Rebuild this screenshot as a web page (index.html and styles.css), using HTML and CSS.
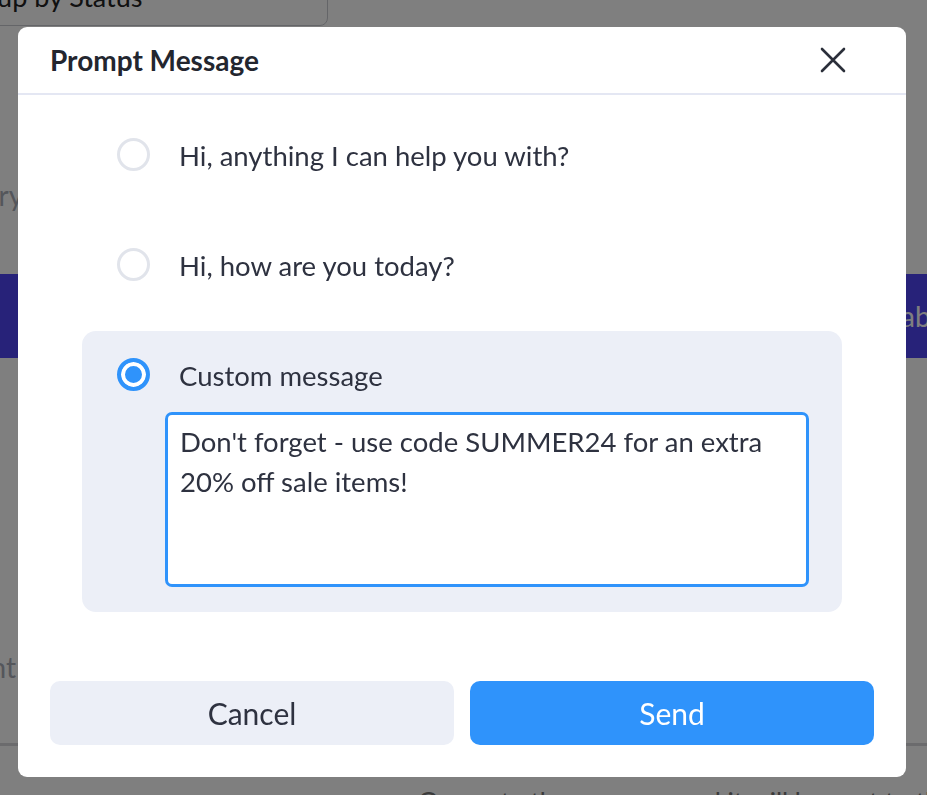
FILE: index.html
```html
<!DOCTYPE html>
<html lang="en">
<head>
<meta charset="utf-8">
<title>Prompt Message</title>
<link rel="stylesheet" href="styles.css">
</head>
<body>
<div class="page">
  <div class="toolbar">
    <div class="select">
      <span>Group by Status</span>
      <svg class="chev" width="20" height="20" viewBox="0 0 20 20"><path d="M4 7l6 6 6-6" fill="none" stroke="#444" stroke-width="2" stroke-linecap="round" stroke-linejoin="round"/></svg>
    </div>
  </div>
  <div class="summary">Summary</div>
  <div class="band"><span class="band-text">Table</span></div>
  <div class="spacer"></div>
  <div class="content">Content</div>
  <div class="rule"></div>
  <div class="footnote">Generate the message and it will be sent to this</div>
</div>

<div class="overlay">
  <div class="modal" role="dialog" aria-labelledby="modal-title">
    <div class="modal-header">
      <h2 id="modal-title" class="modal-title">Prompt Message</h2>
      <button class="close-btn" aria-label="Close">
        <svg width="28" height="28" viewBox="0 0 28 28"><path d="M3 3L25 25M25 3L3 25" fill="none" stroke="#2b2f3a" stroke-width="2.6" stroke-linecap="round"/></svg>
      </button>
    </div>
    <div class="modal-body">
      <label class="option">
        <span class="option-row">
          <span class="radio"></span>
          <span class="option-label">Hi, anything I can help you with?</span>
        </span>
      </label>
      <label class="option">
        <span class="option-row">
          <span class="radio"></span>
          <span class="option-label">Hi, how are you today?</span>
        </span>
      </label>
      <div class="option selected">
        <span class="option-row">
          <span class="radio checked"></span>
          <span class="option-label">Custom message</span>
        </span>
        <div class="textarea">Don't forget - use code SUMMER24 for an extra 20% off sale items!</div>
      </div>
    </div>
    <div class="modal-footer">
      <button class="btn btn-cancel">Cancel</button>
      <button class="btn btn-send">Send</button>
    </div>
  </div>
</div>
</body>
</html>
```

FILE: styles.css
```css
* { box-sizing: border-box; }
html, body { margin: 0; padding: 0; height: 100%; overflow: hidden; }
body {
  font-family: Lato, "Open Sans", Arial, sans-serif;
  background: #ffffff;
  color: #2e3240;
}

/* underlying page */
.page { display: flex; flex-direction: column; }
.toolbar { height: 26px; }
.select {
  width: 392px;
  height: 52px;
  margin-top: -26px;
  margin-left: -64px;
  border: 1px solid #c9cbd1;
  border-radius: 8px;
  display: flex;
  align-items: center;
  justify-content: space-between;
  padding: 0 26px 0 16px;
  font-size: 27px;
  color: #222;
  white-space: nowrap;
}
.select span { margin-top: -8px; }
.chev { margin-top: -30px; }
.summary {
  margin-top: 152px;
  margin-left: -92px;
  font-size: 28px;
  color: #a8acb6;
  height: 42px;
}
.band {
  margin-top: 54px;
  height: 84px;
  background: #4e44f3;
  display: flex;
  align-items: center;
  justify-content: flex-end;
}
.band-text { color: #ffffff; font-size: 28px; margin-right: -25px; white-space: nowrap; }
.spacer { height: 292px; }
.content { margin-left: -84px; font-size: 28px; color: #a8acb6; height: 40px; }
.rule { margin-top: 53px; height: 3px; background: #d6d7da; }
.footnote { margin-top: 40px; margin-left: 418px; font-size: 26px; color: #777; white-space: nowrap; }

/* overlay */
.overlay {
  position: fixed;
  inset: 0;
  background: rgba(0, 0, 0, 0.5);
  display: flex;
  align-items: flex-start;
  padding: 27px 0 0 18px;
}
.modal {
  width: 888px;
  height: 750px;
  background: #ffffff;
  border-radius: 9px;
  display: flex;
  flex-direction: column;
}
.modal-header {
  height: 68px;
  flex: none;
  display: flex;
  align-items: center;
  justify-content: space-between;
  padding: 0 59px 0 32px;
  border-bottom: 2px solid #e4e7f3;
}
.modal-title {
  margin: 0;
  font-size: 28px;
  font-weight: 700;
  color: #23262f;
}
.close-btn {
  border: 0;
  background: none;
  padding: 0;
  width: 28px;
  height: 28px;
  display: flex;
  cursor: pointer;
}
.modal-body {
  flex: 1;
  padding: 16px 64px 0 64px;
  display: flex;
  flex-direction: column;
  gap: 24px;
}
.option {
  display: block;
  padding: 26px 33px 26px 35px;
  border-radius: 14px;
}
.option.selected { background: #eceff7; padding-bottom: 25px; }
.option-row {
  display: flex;
  align-items: center;
  gap: 29px;
  height: 34px;
}
.radio {
  flex: none;
  width: 33px;
  height: 33px;
  border-radius: 50%;
  border: 3px solid #e1e4eb;
  background: #fff;
}
.radio.checked {
  border: 4px solid #2f93fb;
  background: #2f93fb;
  box-shadow: inset 0 0 0 4px #ffffff;
}
.option-label { font-size: 27.5px; color: #2e3240; margin-top: 3px; }
.textarea {
  margin: 21px 0 0 48px;
  height: 175px;
  border: 3px solid #2f93fb;
  border-radius: 7px;
  background: #ffffff;
  padding: 7px 40px 0 12px;
  font-size: 27.5px;
  line-height: 40px;
  color: #2e3240;
}
.modal-footer {
  flex: none;
  display: flex;
  gap: 16px;
  padding: 0 32px 32px 32px;
}
.btn {
  flex: 1;
  height: 64px;
  border: 0;
  border-radius: 10px;
  font-family: Lato, "Open Sans", Arial, sans-serif;
  font-size: 30px;
  cursor: pointer;
}
.btn-cancel { background: #eceff7; color: #2e3240; }
.btn-send { background: #2f93fb; color: #ffffff; }
```
